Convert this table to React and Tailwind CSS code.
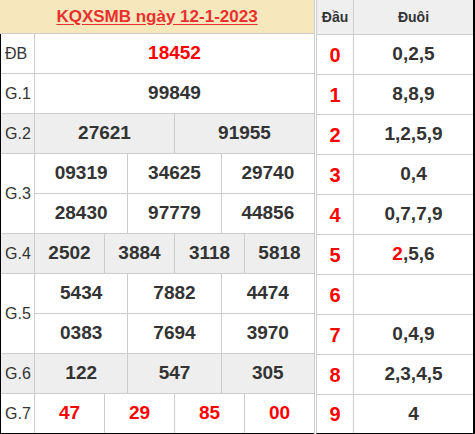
import React from "react";

const LEFT = [
  { label: "ĐB", rows: [["18452"]], red: true },
  { label: "G.1", rows: [["99849"]] },
  { label: "G.2", rows: [["27621", "91955"]], bg: true },
  { label: "G.3", rows: [["09319", "34625", "29740"], ["28430", "97779", "44856"]] },
  { label: "G.4", rows: [["2502", "3884", "3118", "5818"]], bg: true },
  { label: "G.5", rows: [["5434", "7882", "4474"], ["0383", "7694", "3970"]] },
  { label: "G.6", rows: [["122", "547", "305"]], bg: true },
  { label: "G.7", rows: [["47", "29", "85", "00"]], red: true, last: true },
];

const RIGHT = [
  ["0", "0,2,5"],
  ["1", "8,8,9"],
  ["2", "1,2,5,9"],
  ["3", "0,4"],
  ["4", "0,7,7,9"],
  ["5", null],
  ["6", ""],
  ["7", "0,4,9"],
  ["8", "2,3,4,5"],
  ["9", "4"],
];

export default function App() {
  return (
    <div
      className="w-[475px] h-[434px] flex bg-white text-[#333]"
      style={{ fontFamily: '"Liberation Sans", Arial, sans-serif' }}
    >
      {/* Left table */}
      <div className="w-[315px] h-[434px] flex flex-col border-r border-[#ccc]">
        <div className="h-[34px] shrink-0 bg-[#f6e7bd] border-b border-[#ccc] flex items-center justify-center">
          <span className="text-[17px] font-bold text-[#e8312f] underline underline-offset-2">
            KQXSMB ngày 12-1-2023
          </span>
        </div>
        <div className="flex-1 flex flex-col border-l border-black">
          {LEFT.map((g) => (
            <div
              key={g.label}
              className={`flex ${g.bg ? "bg-[#eeeeee]" : "bg-white"} ${
                g.last ? "border-b border-black h-[40px]" : ""
              }`}
            >
              <div
                className={`w-[34px] shrink-0 border-r border-[#ccc] flex items-center pl-[4px] text-[16px] ${
                  g.last ? "" : "border-b"
                }`}
              >
                {g.label}
              </div>
              <div className="flex-1 flex flex-col">
                {g.rows.map((row, ri) => (
                  <div
                    key={ri}
                    className={`flex ${g.last ? "h-[39px]" : "h-[40px] border-b border-[#ccc]"}`}
                  >
                    {row.map((n, ci) => (
                      <div
                        key={ci}
                        className={`flex-1 flex items-center justify-center text-[19px] font-bold ${
                          ci < row.length - 1 ? "border-r border-[#ccc]" : ""
                        } ${g.red ? "text-[#ff0000]" : "text-[#333]"}`}
                      >
                        {n}
                      </div>
                    ))}
                  </div>
                ))}
              </div>
            </div>
          ))}
        </div>
      </div>

      {/* Right table */}
      <div className="ml-px flex-1 h-[434px] flex flex-col border-l border-[#ccc] border-r-2 border-r-black border-b border-b-black">
        <div className="h-[35px] shrink-0 flex bg-[#efefef] border-b border-[#ccc]">
          <div className="w-[37px] shrink-0 border-r border-[#ccc] flex items-center justify-center text-[14px] font-bold">
            Đầu
          </div>
          <div className="flex-1 flex items-center justify-center text-[14px] font-bold">
            Đuôi
          </div>
        </div>
        {RIGHT.map(([d, v], i) => (
          <div
            key={d}
            className={`flex ${i < 9 ? "h-[40px] border-b border-[#ccc]" : "flex-1"}`}
          >
            <div className="w-[37px] shrink-0 border-r border-[#ccc] flex items-center justify-center text-[20px] font-bold text-[#ff0000]">
              {d}
            </div>
            <div className="flex-1 flex items-center justify-center text-[19px] font-bold">
              {v === null ? (
                <span>
                  <span className="text-[#ff0000]">2</span>,5,6
                </span>
              ) : (
                v
              )}
            </div>
          </div>
        ))}
      </div>
    </div>
  );
}
